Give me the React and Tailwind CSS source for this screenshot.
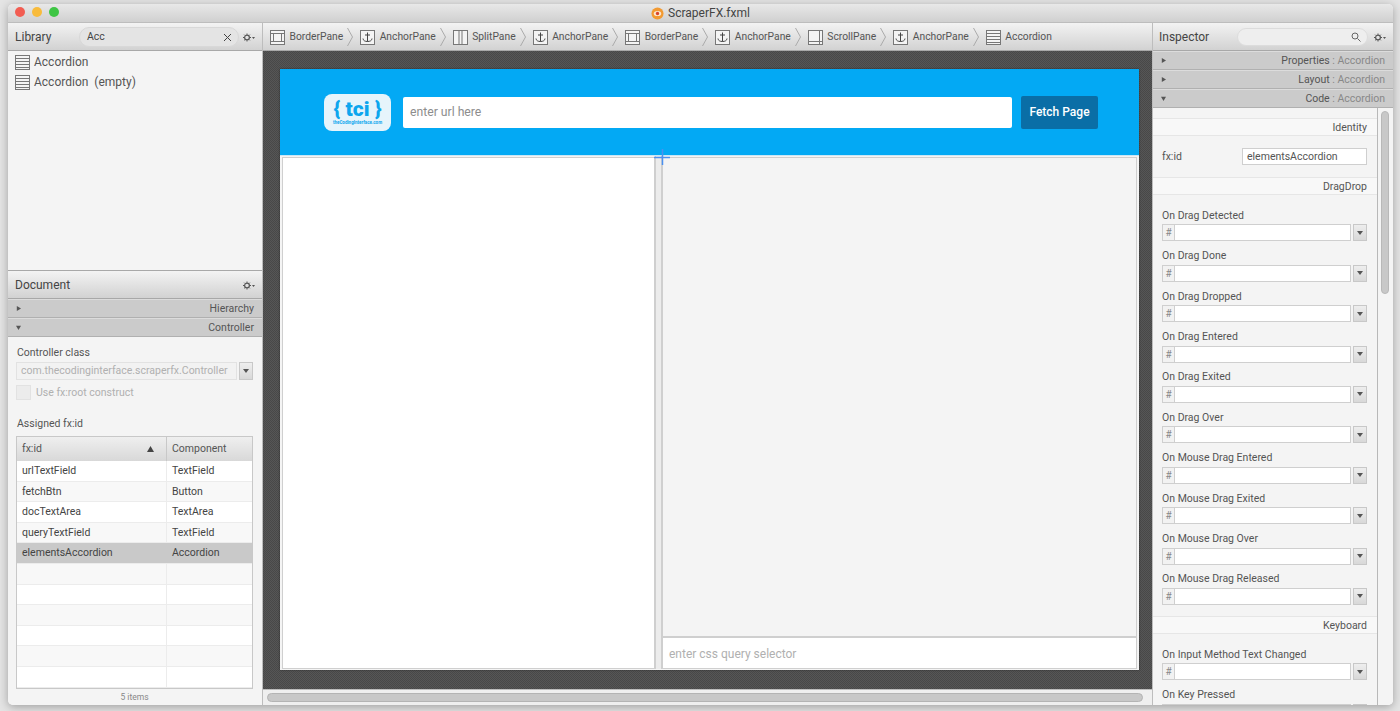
import React from "react";

const font = { fontFamily: 'Roboto,"Liberation Sans",sans-serif' };

function PaneIcon({ kind }) {
  const s = "#777777";
  return (
    <svg width="15" height="15" viewBox="0 0 15 15" fill="none" stroke={s} strokeWidth="1" className="shrink-0">
      {kind === "border" && (<><rect x="0.5" y="0.5" width="14" height="14" fill="#f4f4f4" /><rect x="3.5" y="3.5" width="8" height="8" /><path d="M0.5 3.500h14M0.5 11.500h14" /></>)}
      {kind === "anchor" && (<><rect x="0.5" y="0.5" width="14" height="14" fill="#f4f4f4" /><path d="M7.5 2.500v9M5 5h5M3 8.500c0 2 2 3 4.500 3s4.500-1 4.500-3" stroke="#444" /></>)}
      {kind === "split" && (<><rect x="0.5" y="0.5" width="14" height="14" fill="#f4f4f4" /><path d="M6 0.500v14M9 0.500v14" /></>)}
      {kind === "scroll" && (<><rect x="0.5" y="0.5" width="14" height="14" fill="#f4f4f4" /><path d="M0.5 11.500h14M11.500 0.500v14" /></>)}
      {kind === "accordion" && (<><rect x="0.5" y="0.5" width="14" height="14" fill="#f4f4f4" /><path d="M0.5 3.500h14M0.5 6.500h14M0.5 9.500h14M0.5 12.500h14" /></>)}
    </svg>
  );
}

function Chevron() {
  return (
    <svg width="6" height="20" viewBox="0 0 6 20" fill="none" stroke="#aaa" className="shrink-0">
      <path d="M0.5 1l5 9-5 9" />
    </svg>
  );
}

function Gear() {
  return (
    <svg width="12" height="9" viewBox="0 0 12 9" className="shrink-0">
      <circle cx="4" cy="4.500" r="2.400" fill="none" stroke="#555" strokeWidth="1.200" />
      <path d="M4 0.500v1.200M4 7.300v1.200M0 4.500h1.200M6.800 4.500h1.200M1.200 1.700l.8.800M6 6.500l.8.800M1.200 7.300l.8-.8M6 2.500l.8-.8" stroke="#555" strokeWidth="1" />
      <path d="M9 4h3l-1.500 2z" fill="#555" />
    </svg>
  );
}

function Caret({ open }) {
  return (
    <svg width="5" height="5" viewBox="0 0 6 6" className="shrink-0" fill="#555">
      {open ? <path d="M0 1h6l-3 5z" /> : <path d="M1 0l5 3-5 3z" />}
    </svg>
  );
}

function SectionBar({ open, children }) {
  return (
    <div className="h-[19px] shrink-0 flex items-center justify-between pl-[8px] pr-[8px] bg-[#cbcbcb] border-b border-[#b0b0b0] border-t-[#dcdcdc] border-t text-[10.500px] text-[#555]">
      <Caret open={open} />
      <span>{children}</span>
    </div>
  );
}

function HeadBar({ children, className = "" }) {
  return (
    <div className={`h-[28px] shrink-0 flex items-center pt-[1px] bg-gradient-to-b from-[#f3f3f3] to-[#d2d2d2] border-b border-[#a8a8a8] ${className}`}>
      {children}
    </div>
  );
}

function DropBtn({ h = "h-[17px]" }) {
  return (
    <div className={`w-[14px] ${h} shrink-0 flex items-center justify-center bg-gradient-to-b from-[#eeeeee] to-[#d8d8d8] border border-[#c8c8c8]`}>
      <svg width="6" height="4" viewBox="0 0 6 4" fill="#555"><path d="M0 0h6l-3 4z" /></svg>
    </div>
  );
}

function EventRow({ label, noHash }) {
  return (
    <div className="h-[40.4px] shrink-0 pl-[9px] pr-[10px] flex flex-col justify-end">
      <div className="text-[10.500px] leading-[14px] text-[#555] mb-[1.500px]">{label}</div>
      <div className="flex items-center gap-[2px] h-[17px]">
        <div className="flex flex-1 h-[17px] border border-[#cfcfcf] bg-white">
          <div className="w-[12px] h-full bg-[#f2f2f2] border-r border-[#cfcfcf] text-[10px] text-[#888] flex items-center justify-center">{noHash ? null : "#"}</div>
          <div className="flex-1" />
        </div>
        <DropBtn />
      </div>
    </div>
  );
}

function SectionTitle({ children }) {
  return (
    <div className="h-[18px] shrink-0 flex items-center justify-end pr-[10px] pt-[1px] bg-[#f8f8f8] border-y border-[#e6e6e6] text-[10.500px] text-[#555]">
      {children}
    </div>
  );
}

const rows = [
  ["urlTextField", "TextField"],
  ["fetchBtn", "Button"],
  ["docTextArea", "TextArea"],
  ["queryTextField", "TextField"],
  ["elementsAccordion", "Accordion"],
  ["", ""], ["", ""], ["", ""], ["", ""], ["", ""], ["", ""],
];

const crumbs = [
  ["border", "BorderPane"],
  ["anchor", "AnchorPane"],
  ["split", "SplitPane"],
  ["anchor", "AnchorPane"],
  ["border", "BorderPane"],
  ["anchor", "AnchorPane"],
  ["scroll", "ScrollPane"],
  ["anchor", "AnchorPane"],
  ["accordion", "Accordion"],
];

const dragEvents = ["On Drag Detected", "On Drag Done", "On Drag Dropped", "On Drag Entered", "On Drag Exited", "On Drag Over", "On Mouse Drag Entered", "On Mouse Drag Exited", "On Mouse Drag Over", "On Mouse Drag Released"];

export default function App() {
  return (
    <div style={font} className="w-[1400px] h-[711px] bg-[#e4e4e4] overflow-hidden pt-[4px] pl-[8px]">
      <div className="w-[1385px] h-[701px] flex flex-col rounded-[5px] overflow-hidden bg-[#f4f4f4] shadow-[0_2px_10px_rgba(0,0,0,0.3)]">
        {/* title bar */}
        <div className="relative h-[19px] shrink-0 flex items-center justify-center gap-[4px] bg-gradient-to-b from-[#e8e8e8] to-[#d0d0d0] border-b border-[#bdbdbd]">
          <div className="absolute left-[7px] top-[3px] flex gap-[7px]">
            <div className="w-[10px] h-[10px] rounded-full bg-[#f25d52]" />
            <div className="w-[10px] h-[10px] rounded-full bg-[#f8bb3c]" />
            <div className="w-[10px] h-[10px] rounded-full bg-[#3ec544]" />
          </div>
          <svg width="13" height="13" viewBox="0 0 14 14" className="shrink-0">
            <circle cx="7" cy="7" r="6.500" fill="#f29a32" />
            <ellipse cx="7" cy="7" rx="4" ry="2.800" fill="#fbe5cd" />
            <circle cx="7" cy="7" r="1.800" fill="#d8452a" />
          </svg>
          <span className="text-[12px] text-[#444]">ScraperFX.fxml</span>
        </div>

        <div className="flex-1 flex min-h-0">
          {/* left */}
          <div className="w-[255px] shrink-0 flex flex-col border-r border-[#bdbdbd] bg-[#f4f4f4]">
            <HeadBar className="pl-[7px] pr-[7px]">
              <span className="text-[12px] text-[#444] w-[64px]">Library</span>
              <div className="w-[160px] h-[20px] rounded-full bg-[#e4e4e4] border border-[#d8d8d8] flex items-center justify-between pl-[7px] pr-[6px] text-[10.500px] text-[#444]">
                <span>Acc</span>
                <svg width="9" height="9" viewBox="0 0 9 9" stroke="#444" strokeWidth="1"><path d="M1 1l7 7M8 1l-7 7" /></svg>
              </div>
              <div className="ml-auto"><Gear /></div>
            </HeadBar>
            <div className="h-[220px] shrink-0 pl-[7px] pt-[1px] text-[12px] text-[#555] border-b border-[#a8a8a8]">
              <div className="h-[20px] flex items-center gap-[4px]"><PaneIcon kind="accordion" /><span>Accordion</span></div>
              <div className="h-[20px] flex items-center gap-[4px]"><PaneIcon kind="accordion" /><span>Accordion&nbsp; (empty)</span></div>
            </div>
            <HeadBar className="pl-[7px] pr-[7px]">
              <span className="text-[12px] text-[#444]">Document</span>
              <div className="ml-auto"><Gear /></div>
            </HeadBar>
            <SectionBar>Hierarchy</SectionBar>
            <SectionBar open>Controller</SectionBar>
            <div className="flex-1 flex flex-col min-h-0 pl-[8px] pr-[9px]">
              <div className="text-[10.500px] text-[#555] mt-[9px] ml-[1px] leading-[13px]">Controller class</div>
              <div className="flex gap-[2px] mt-[3px] h-[18px]">
                <div className="flex-1 border border-[#e2e2e2] bg-[#f2f2f2] text-[10.500px] text-[#b0b0b0] flex items-center pl-[4px] whitespace-nowrap">com.thecodinginterface.scraperfx.Controller</div>
                <DropBtn h="h-[18px]" />
              </div>
              <div className="flex items-center gap-[5px] mt-[5px] h-[15px] text-[10.500px] text-[#b0b0b0]">
                <div className="w-[15px] h-[15px] bg-[#ececec] border border-[#e2e2e2]" />
                <span>Use fx:root construct</span>
              </div>
              <div className="text-[10.500px] text-[#555] mt-[17px] ml-[1px] leading-[13px]">Assigned fx:id</div>
              <div className="mt-[6px] border border-[#c8c8c8] bg-white flex flex-col h-[253px] overflow-hidden">
                <div className="h-[24px] shrink-0 flex bg-gradient-to-b from-[#efefef] to-[#d8d8d8] text-[10.500px] text-[#555]">
                  <div className="w-[150px] flex items-center justify-between pl-[5px] pr-[12px] border-r border-[#c8c8c8]">
                    <span>fx:id</span>
                    <svg width="7" height="6" viewBox="0 0 7 6" fill="#444"><path d="M3.500 0l3.500 6h-7z" /></svg>
                  </div>
                  <div className="flex-1 flex items-center pl-[5px]">Component</div>
                </div>
                {rows.map((r, i) => (
                  <div key={i} className={`h-[20.600px] shrink-0 flex text-[10.500px] text-[#444] border-b border-[#ececec] ${i === 4 ? "bg-[#c9c9c9]" : i % 2 ? "bg-[#f8f8f8]" : "bg-white"}`}>
                    <div className={`w-[150px] flex items-center pl-[5px] ${i === 4 ? "" : "border-r border-[#ececec]"}`}>{r[0]}</div>
                    <div className="flex-1 flex items-center pl-[5px]">{r[1]}</div>
                  </div>
                ))}
              </div>
              <div className="flex-1 flex items-center justify-center text-[8.500px] text-[#888]">5 items</div>
            </div>
          </div>

          {/* center */}
          <div className="flex-1 min-w-0 flex flex-col">
            <HeadBar className="pl-[7px] gap-[4px] text-[10.300px] text-[#555] whitespace-nowrap">
              {crumbs.map(([k, t], i) => (
                <React.Fragment key={i}>
                  <div className={`flex items-center gap-[4.500px] ${i ? "ml-[3px]" : ""}`}><PaneIcon kind={k} /><span>{t}</span></div>
                  {i < crumbs.length - 1 && <Chevron />}
                </React.Fragment>
              ))}
            </HeadBar>
            <div className="flex-1 min-h-0 pt-[18px] px-[17px] bg-[#4d4d4d] bg-[repeating-conic-gradient(#565656_0_25%,#484848_0_50%)] bg-[length:2px_2px]">
              <div className="w-[859px] h-[601px] flex flex-col bg-[#f4f4f4] shadow-[0_0_2px_rgba(0,0,0,0.4)]">
                <div className="h-[86px] shrink-0 bg-[#03a9f4] flex items-center pl-[44px]">
                  <div className="w-[67px] h-[37px] rounded-[8px] bg-[#e6f4fb] flex flex-col items-center justify-center text-[#0da6ee]">
                    <div className="text-[21px] font-black leading-[22px] whitespace-nowrap">{"{ tci }"}</div>
                    <div className="text-[4.500px] font-bold leading-[6px] whitespace-nowrap">theCodingInterface.com</div>
                  </div>
                  <div className="ml-[12px] w-[609px] h-[31px] rounded-[2px] bg-white flex items-center pl-[7px] pt-[1px] text-[12.200px] text-[#8d8d8d]">enter url here</div>
                  <div className="ml-[9px] w-[77px] h-[33px] rounded-[2px] bg-[#0a6ea6] flex items-center justify-center text-[12px] font-medium text-white">Fetch Page</div>
                </div>
                <div className="relative flex-1 flex min-h-0 px-[2px] pb-[1px] border-t border-[#c9e6f5]">
                  <div className="w-[373px] bg-white border border-[#cfcfcf] mt-[1px]" />
                  <div className="w-[7px] bg-[#ececec] border-x border-[#cfcfcf]" />
                  <div className="flex-1 flex flex-col mt-[1px]">
                    <div className="flex-1 bg-[#f4f4f4] border border-[#cfcfcf] border-b-0" />
                    <div className="h-[33px] bg-white border border-[#cfcfcf] border-t-2 flex items-center pl-[6px] pt-[1px] text-[12px] text-[#b0b0b0]">enter css query selector</div>
                  </div>
                  <svg width="16" height="16" viewBox="0 0 16 16" className="absolute left-[374px] top-[-7px]" stroke="#4a90f0" strokeWidth="1.500">
                    <path d="M8.500 0v16M0 8.500h16" />
                  </svg>
                </div>
              </div>
            </div>
            <div className="h-[16px] shrink-0 bg-[#efefef] border-t border-[#bdbdbd] flex items-center pl-[4px] pr-[9px]">
              <div className="h-[9px] flex-1 rounded-full bg-[#c8c8c8] border border-[#b4b4b4]" />
            </div>
          </div>

          {/* right */}
          <div className="w-[241px] shrink-0 flex flex-col border-l border-[#bdbdbd] bg-[#f4f4f4]">
            <HeadBar className="pl-[6px] pr-[7px]">
              <span className="text-[12px] text-[#444] w-[78px]">Inspector</span>
              <div className="w-[131px] h-[18px] rounded-full bg-[#eeeeee] border border-[#dcdcdc] flex items-center justify-end pr-[6px]">
                <svg width="10" height="10" viewBox="0 0 10 10" fill="none" stroke="#666" strokeWidth="1"><circle cx="4" cy="4" r="3" /><path d="M6.500 6.500l3 3" /></svg>
              </div>
              <div className="ml-auto"><Gear /></div>
            </HeadBar>
            <SectionBar><span>Properties</span> <span className="text-[#888]">: Accordion</span></SectionBar>
            <SectionBar><span>Layout</span> <span className="text-[#888]">: Accordion</span></SectionBar>
            <SectionBar open><span>Code</span> <span className="text-[#888]">: Accordion</span></SectionBar>
            <div className="flex-1 flex min-h-0">
              <div className="flex-1 min-w-0 flex flex-col overflow-hidden pt-[10px]">
                <SectionTitle>Identity</SectionTitle>
                <div className="h-[41px] shrink-0 flex items-center justify-between pl-[9px] pr-[10px] text-[10.500px] text-[#555]">
                  <span>fx:id</span>
                  <div className="w-[125px] h-[17px] bg-white border border-[#cfcfcf] flex items-center pl-[4px]">elementsAccordion</div>
                </div>
                <SectionTitle>DragDrop</SectionTitle>
                <div className="h-[6px] shrink-0" />
                {dragEvents.map((e) => <EventRow key={e} label={e} />)}
                <div className="h-[11px] shrink-0" />
                <SectionTitle>Keyboard</SectionTitle>
                <div className="h-[6px] shrink-0" />
                <EventRow label="On Input Method Text Changed" />
                <EventRow label="On Key Pressed" noHash />
              </div>
              <div className="w-[16px] shrink-0 border-l border-[#b8b8b8] bg-[#f4f4f4] pt-[3px] pl-[3px] pr-[4px]">
                <div className="h-[183px] rounded-full bg-[#c8c8c8] border border-[#b8b8b8]" />
              </div>
            </div>
          </div>
        </div>
      </div>
    </div>
  );
}
